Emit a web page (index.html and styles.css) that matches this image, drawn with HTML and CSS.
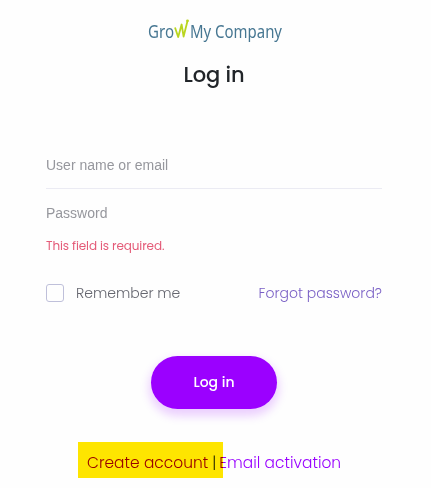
FILE: index.html
```html
<!DOCTYPE html>
<html lang="en">
<head>
<meta charset="utf-8">
<title>Log in</title>
<link rel="stylesheet" href="styles.css">
</head>
<body>
<main class="login">
  <svg class="logo" width="140" height="32" viewBox="0 0 140 32" role="img" aria-label="Grow My Company">
    <text x="1" y="23" textLength="26" lengthAdjust="spacingAndGlyphs">Gro</text>
    <path class="logo-w" d="M28 12.5 31.2 22 34.6 9.5 36.6 21.5 40.5 6"/>
    <circle class="logo-dot" cx="40.5" cy="5.8" r="1.4"/>
    <text x="43" y="23" textLength="92" lengthAdjust="spacingAndGlyphs">My Company</text>
  </svg>
  <h1 class="title">Log in</h1>
  <form class="form">
    <input class="field" type="text" placeholder="User name or email">
    <input class="field field-last" type="password" placeholder="Password">
    <div class="error"><span>This field is required.</span></div>
    <div class="options">
      <label class="remember"><span class="box"></span><span class="remember-text">Remember me</span></label>
      <a class="forgot">Forgot password?</a>
    </div>
    <button class="submit" type="button"><span>Log in</span></button>
  </form>
  <div class="links"><a class="create">Create account</a><span class="sep">|</span><a class="activation">Email activation</a><span class="highlight"></span></div>
</main>
</body>
</html>
```
FILE: styles.css
```css
* { box-sizing: border-box; }
body { margin: 0; background: #fefefe; font-family: Poppins, Inter, sans-serif; font-weight: 300; }
.login { width: 336px; height: 488px; margin-left: 46px; padding-top: 15px; display: flex; flex-direction: column; }
.logo { display: block; overflow: visible; margin-left: 101px; font: 400 17.5px "Noto Sans", sans-serif; fill: #477792; }
.logo-w { fill: none; stroke: #b9d51f; stroke-width: 1.8; stroke-linejoin: round; }
.logo-dot { fill: #b9d51f; }
.title { margin: 12px 0 0; height: 32px; line-height: 32px; text-align: center; font-size: 21px; font-weight: 500; letter-spacing: -.1px; color: #212529; }
.form { margin-top: 50px; display: flex; flex-direction: column; }
.field { width: 100%; height: 48px; padding: 0; border: 0; border-bottom: 1px solid #ebebf3; background: transparent; font: 400 14px "Liberation Sans", sans-serif; outline: 0; }
.field::placeholder { color: #96979d; opacity: 1; }
.field-last { border-bottom: 0; }
.error { height: 18px; line-height: 18px; font-size: 12px; font-weight: 400; letter-spacing: -.11px; color: #e45b78; }
.options { margin-top: 26px; height: 24px; display: flex; align-items: center; justify-content: space-between; font-size: 14px; line-height: 22px; color: #65666f; }
.remember { display: flex; align-items: center; gap: 12px; }
.box { width: 18px; height: 18px; border: 1px solid #bfc0da; border-radius: 3px; }
.forgot { color: #795fc5; }
.submit { align-self: center; width: 126px; height: 53px; margin-top: 51px; padding: 0; border: 0; border-radius: 27px; background: #9b00ff; color: #fff; font: 500 14px Poppins, Inter, sans-serif; box-shadow: 0 5px 10px 2px rgba(155, 0, 255, .19); }
.links { position: relative; height: 36px; margin: 33px 0 0 32px; padding: 3px 0 0 9px; line-height: 36px; font-size: 15.4px; letter-spacing: .03px; color: #212529; display: flex; white-space: nowrap; }
.create, .activation { color: #9800ff; }
.sep { margin: 0 3px 0 4px; }
.highlight { position: absolute; left: 0; top: 0; width: 145px; height: 36px; background: #ffe600; mix-blend-mode: multiply; }
```
